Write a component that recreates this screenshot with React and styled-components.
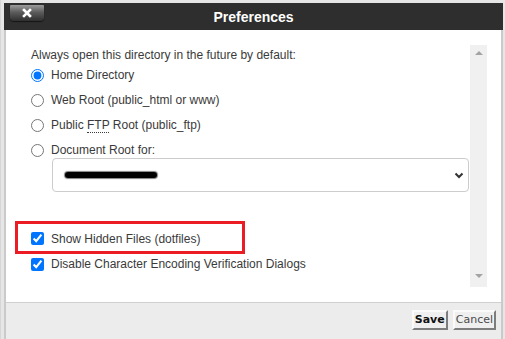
import React from 'react';
import styled, { createGlobalStyle } from 'styled-components';

const GlobalStyle = createGlobalStyle`
  body {
    margin: 0;
    background: #e6e6e6;
    font-family: 'Liberation Sans', Arial, sans-serif;
  }
`;

const Page = styled.div`
  height: 339px;
  overflow: hidden;
  padding: 3px 0 0 4px;
  box-sizing: border-box;
  border-left: 1px solid #d6d6d6;
`;

const Dialog = styled.div`
  width: 499px;
  margin-left: -1px;
  display: flex;
  flex-direction: column;
`;

const TitleBar = styled.div`
  height: 27px;
  background: #2e2e2e;
  display: grid;
  grid-template-columns: 1fr auto 1fr;
  align-items: center;
`;

const CloseButton = styled.button`
  justify-self: start;
  align-self: start;
  margin: 2px 0 0 6px;
  width: 34px;
  height: 16px;
  padding: 0;
  border: none;
  border-radius: 1px 1px 4px 4px;
  background: linear-gradient(#9c9c9c, #5c5c5c 45%, #2f2f2f);
  box-shadow: 0 1px 1px #161616;
  display: flex;
  align-items: center;
  justify-content: center;
  cursor: pointer;
`;

const Title = styled.h1`
  margin: 0;
  color: #fff;
  font-size: 14px;
  font-weight: bold;
  font-family: 'Liberation Sans', Arial, sans-serif;
`;

const Main = styled.div`
  border: 2px solid #cacaca;
  border-top: none;
  border-bottom-width: 3px;
`;

const Body = styled.div`
  height: 272px;
  background: #fff;
  display: flex;
`;

const Content = styled.div`
  flex: 1;
  padding: 17px 0 0 25px;
  color: #3a3a3a;
  font-size: 12px;
`;

const Heading = styled.div`
  line-height: 16px;
  margin-bottom: 2px;
`;

const OptionList = styled.div`
  display: flex;
  flex-direction: column;
  gap: 5px;
`;

const Option = styled.label`
  height: 20px;
  display: flex;
  align-items: center;
  gap: 7px;
  line-height: 16px;

  input {
    margin: 0;
    width: 13px;
    height: 13px;
  }
`;

const Abbr = styled.abbr`
  text-decoration: none;
  border-bottom: 1px dotted #3a3a3a;
  line-height: 13px;
`;

const SelectBox = styled.div`
  margin: -2px 0 0 21px;
  width: 417px;
  height: 34px;
  box-sizing: border-box;
  border: 1px solid #cccccc;
  border-radius: 4px;
  display: flex;
  align-items: center;
  justify-content: space-between;
  padding: 0 4px 0 12px;
`;

const Redaction = styled.span`
  width: 92px;
  height: 6px;
  background: #000;
  border-radius: 3px;
  box-shadow: 0 0 1px 1px rgba(0, 0, 0, 0.5);
`;

const Highlight = styled.div`
  margin: 29px 0 0 -16px;
  width: 230px;
  height: 33px;
  box-sizing: border-box;
  border: 3px solid #ec1c24;
  padding: 2px 0 0 13px;
  display: flex;
  align-items: center;
`;

const ScrollTrack = styled.div`
  width: 17px;
  margin: 15px 14px 15px 0;
  background: #f0f0f0;
  display: flex;
  flex-direction: column;
  justify-content: space-between;
  align-items: center;
  padding: 6px 0 9px;
  box-sizing: border-box;
`;

const Arrow = styled.span`
  width: 0;
  height: 0;
  border-left: 4px solid transparent;
  border-right: 4px solid transparent;
  ${({ $down }) =>
    $down ? 'border-top: 4px solid #a3a3a3;' : 'border-bottom: 4px solid #a3a3a3;'}
`;

const Footer = styled.div`
  height: 33px;
  border-top: 1px solid #cfcfcf;
  background: #ececec;
  display: flex;
  justify-content: flex-end;
  align-items: flex-start;
  gap: 5px;
  padding: 7px 5px 0 0;
`;

const FooterButton = styled.button`
  height: 20px;
  padding: 0 1px;
  box-sizing: border-box;
  background: #efefef;
  border: 2px solid;
  border-color: #fafafa #7d7d7d #7d7d7d #fafafa;
  font-family: 'DejaVu Sans', Verdana, sans-serif;
  font-size: 11px;
  line-height: 14px;
  font-weight: ${({ $primary }) => ($primary ? 'bold' : 'normal')};
  color: ${({ $primary }) => ($primary ? '#111' : '#4a4a4a')};
  cursor: pointer;
`;

export default function App() {
  return (
    <>
      <GlobalStyle />
      <Page>
        <Dialog>
          <TitleBar>
            <CloseButton aria-label="Close">
              <svg width="10" height="10" viewBox="0 0 10 10">
                <path d="M2 2 L8 8 M8 2 L2 8" stroke="#fff" strokeWidth="2.6" strokeLinecap="square" />
              </svg>
            </CloseButton>
            <Title>Preferences</Title>
            <span />
          </TitleBar>
          <Main>
            <Body>
              <Content>
                <Heading>Always open this directory in the future by default:</Heading>
                <OptionList>
                  <Option>
                    <input type="radio" name="dir" defaultChecked />
                    Home Directory
                  </Option>
                  <Option>
                    <input type="radio" name="dir" />
                    Web Root (public_html or www)
                  </Option>
                  <Option>
                    <input type="radio" name="dir" />
                    <span>
                      Public <Abbr title="File Transfer Protocol">FTP</Abbr> Root (public_ftp)
                    </span>
                  </Option>
                  <Option>
                    <input type="radio" name="dir" />
                    Document Root for:
                  </Option>
                </OptionList>
                <SelectBox>
                  <Redaction />
                  <svg width="10" height="10" viewBox="0 0 10 10">
                    <path d="M1.5 3.5 L5 7 L8.5 3.5" fill="none" stroke="#333" strokeWidth="2" />
                  </svg>
                </SelectBox>
                <Highlight>
                  <Option>
                    <input type="checkbox" defaultChecked />
                    Show Hidden Files (dotfiles)
                  </Option>
                </Highlight>
                <Option>
                  <input type="checkbox" defaultChecked />
                  Disable Character Encoding Verification Dialogs
                </Option>
              </Content>
              <ScrollTrack>
                <Arrow />
                <Arrow $down />
              </ScrollTrack>
            </Body>
            <Footer>
              <FooterButton $primary>Save</FooterButton>
              <FooterButton>Cancel</FooterButton>
            </Footer>
          </Main>
        </Dialog>
      </Page>
    </>
  );
}
